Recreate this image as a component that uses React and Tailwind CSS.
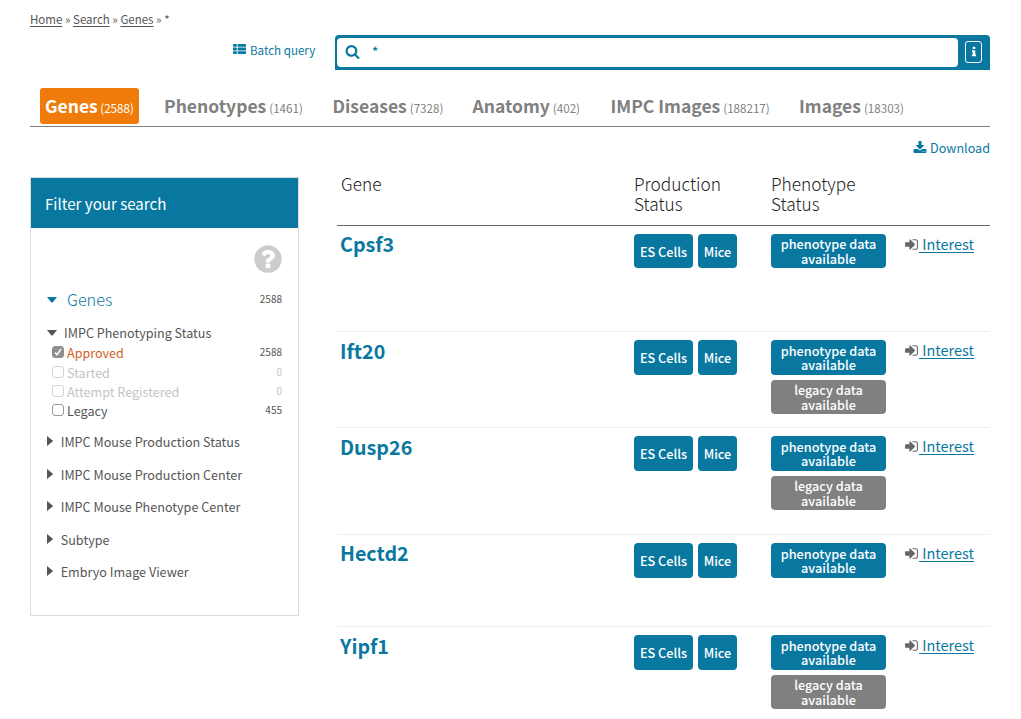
const ICONS = {
  search:
    "M1216 832q0-185-131.5-316.5t-316.5-131.5-316.5 131.5-131.5 316.5 131.5 316.5 316.5 131.5 316.5-131.5 131.5-316.5zm512 832q0 52-38 90t-90 38q-54 0-90-38l-343-342q-179 124-399 124-143 0-273.5-55.5t-225-150-150-225-55.5-273.5 55.5-273.5 150-225 225-150 273.5-55.5 273.5 55.5 225 150 150 225 55.5 273.5q0 220-124 399l343 343q37 37 37 90z",
  question:
    "M1024 1376v-192q0-14-9-23t-23-9h-192q-14 0-23 9t-9 23v192q0 14 9 23t23 9h192q14 0 23-9t9-23zm256-672q0-88-55.5-163t-138.5-116-170-41q-243 0-371 213-15 24 8 42l132 100q7 6 19 6 16 0 25-12 53-68 86-92 34-24 86-24 48 0 85.5 26t37.5 59q0 38-20 61t-68 45q-63 28-115.5 86.5t-52.5 125.5v36q0 14 9 23t23 9h192q14 0 23-9t9-23q0-19 21.5-49.5t54.5-49.5q32-18 49-28.5t46-35 44.5-48 28-60.5 12.5-81zm384 192q0 209-103 385.5t-279.5 279.5-385.5 103-385.5-103-279.5-279.5-103-385.5 103-385.5 279.5-279.5 385.5-103 385.5 103 279.5 279.5 103 385.5z",
  download:
    "M1344 1344q0-26-19-45t-45-19-45 19-19 45 19 45 45 19 45-19 19-45zm256 0q0-26-19-45t-45-19-45 19-19 45 19 45 45 19 45-19 19-45zm128-224v320q0 40-28 68t-68 28h-1472q-40 0-68-28t-28-68v-320q0-40 28-68t68-28h465l135 136q58 56 136 56t136-56l136-136h464q40 0 68 28t28 68zm-325-569q17 41-14 70l-448 448q-18 19-45 19t-45-19l-448-448q-31-29-14-70 17-39 59-39h256v-448q0-26 19-45t45-19h256q26 0 45 19t19 45v448h256q42 0 59 39z",
  signIn:
    "M1312 896q0 26-19 45l-544 544q-19 19-45 19t-45-19-19-45v-288h-448q-26 0-45-19t-19-45v-384q0-26 19-45t45-19h448v-288q0-26 19-45t45-19 45 19l544 544q19 19 19 45zm352-352v704q0 119-84.5 203.5t-203.5 84.5h-320q-13 0-22.5-9.5t-9.5-22.5q0-4-1-20t-.5-26.5 3-23.5 10-19.5 20.5-6.5h320q66 0 113-47t47-113v-704q0-66-47-113t-113-47h-312l-11.5-1-11.5-3-8-5.5-7-9-2-13.5q0-4-1-20t-.5-26.5 3-23.5 10-19.5 20.5-6.5h320q119 0 203.5 84.5t84.5 203.5z",
  info:
    "M1216 1344v128q0 26-19 45t-45 19h-512q-26 0-45-19t-19-45v-128q0-26 19-45t45-19h64v-384h-64q-26 0-45-19t-19-45v-128q0-26 19-45t45-19h384q26 0 45 19t19 45v576h64q26 0 45 19t19 45zm-128-1152v192q0 26-19 45t-45 19h-256q-26 0-45-19t-19-45v-192q0-26 19-45t45-19h256q26 0 45 19t19 45z",
};

function Icon({ name, className }) {
  return (
    <svg viewBox="0 0 1792 1792" className={className} fill="currentColor">
      <path d={ICONS[name]} />
    </svg>
  );
}

function ListIcon({ className }) {
  return (
    <svg viewBox="0 0 13 10" className={className} fill="currentColor">
      {[0, 3.6, 7.2].map((y) => (
        <g key={y}>
          <rect x="0" y={y} width="3.8" height="2.8" rx="0.4" />
          <rect x="4.6" y={y} width="8.4" height="2.8" rx="0.4" />
        </g>
      ))}
    </svg>
  );
}

function Down({ className }) {
  return (
    <svg viewBox="0 0 10 6" className={className} fill="currentColor">
      <path d="M0 0h10L5.8 5.2q-.8.8-1.6 0z" />
    </svg>
  );
}

function Right() {
  return (
    <svg viewBox="0 0 6 10" className="h-[10px] w-[6px]" fill="currentColor">
      <path d="M0 0v10L5.6 5.6q.6-.6 0-1.2z" />
    </svg>
  );
}

const tabs = [
  ["Phenotypes", "(1461)", "w-[168.5px]"],
  ["Diseases", "(7328)", "w-[140px]"],
  ["Anatomy", "(402)", "w-[138px]"],
  ["IMPC Images", "(188217)", "w-[188.5px]"],
  ["Images", "(18303)", "w-[110px]"],
];

const options = [
  { label: "Approved", count: "2588", checked: true, color: "text-[#d2611e]", num: "text-[#555]", box: "border-[#8e8e93] bg-[#8e8e93]", h: "h-[20px]" },
  { label: "Started", count: "0", color: "text-[#c4c4c4]", num: "text-[#c4c4c4]", box: "border-[#d4d4d4]", h: "h-[19px]" },
  { label: "Attempt Registered", count: "0", color: "text-[#c4c4c4]", num: "text-[#c4c4c4]", box: "border-[#d4d4d4]", h: "h-[19px]" },
  { label: "Legacy", count: "455", color: "text-[#555]", num: "text-[#555]", box: "border-[#999]", h: "h-[20px]" },
];

const facets = [
  ["IMPC Mouse Production Status", "h-[33px]"],
  ["IMPC Mouse Production Center", "h-[32px]"],
  ["IMPC Mouse Phenotype Center", "h-[33px]"],
  ["Subtype", "h-[32px]"],
  ["Embryo Image Viewer", "h-[20px]"],
];

const genes = [
  { name: "Cpsf3", row: "h-[106px]", badge: "h-[34px]", top: "pt-[6px]" },
  { name: "Ift20", legacy: true, row: "h-[96px]", badge: "h-[35px]", top: "pt-[7px]" },
  { name: "Dusp26", legacy: true, row: "h-[107px]", badge: "h-[35px]", top: "pt-[7px]" },
  { name: "Hectd2", row: "h-[92px]", badge: "h-[35px]", top: "pt-[6px]" },
  { name: "Yipf1", legacy: true, row: "h-[106px]", badge: "h-[35px]", top: "pt-[7px]" },
];

function Header() {
  return (
    <header className="shrink-0">
      <nav className="mt-[9px] h-[20px] text-[11.5px] leading-[20px] text-[#555]">
        <a className="underline underline-offset-2">Home</a> » <a className="underline underline-offset-2">Search</a> »{" "}
        <a className="underline underline-offset-2">Genes</a> » *
      </nav>
      <div className="mt-[6px] flex h-[35px]">
        <a className="flex w-[305px] items-start pl-[203px] text-[#0978a1]">
          <ListIcon className="mt-[9px] h-[10px] w-[13px]" />
          <span className="ml-[4px] mt-[5px] text-[11.6px] leading-[20px]">Batch query</span>
        </a>
        <div className="flex w-[655px] rounded-t-[4px] bg-[#0978a1] py-[3px] pl-[2px]">
          <div className="flex w-[621px] rounded-[4px] bg-white pl-[8px] text-[#0978a1]">
            <Icon name="search" className="mt-[6px] h-[15px] w-[15px]" />
            <span className="ml-[12px] mt-[4px] text-[13px] font-medium leading-[20px]">*</span>
          </div>
          <div className="ml-[7px] mt-[3px] flex h-[22px] w-[17px] items-center justify-center rounded-[3px] border border-white text-white">
            <Icon name="info" className="h-[12px] w-[12px]" />
          </div>
        </div>
      </div>
      <div className="flex h-[57px] items-end border-b border-[#808080] pl-[10px]">
        <div className="mb-[2px] mr-[25px] flex h-[36px] w-[99px] items-baseline rounded-[3px] bg-[#ef7b0b] pl-[5px] leading-[36px] text-white">
          <b className="text-[17.5px]">Genes</b>
          <span className="ml-[2.5px] text-[11.6px]">(2588)</span>
        </div>
        {tabs.map(([label, count, width]) => (
          <div key={label} className={"mb-[2px] flex h-[36px] items-baseline whitespace-nowrap leading-[36px] text-[#808080] " + width}>
            <b className="text-[17.5px]">{label}</b>
            <span className="ml-[3px] text-[11.6px]">{count}</span>
          </div>
        ))}
      </div>
      <div className="flex h-[42px] justify-end pt-[11px] text-[#0978a1]">
        <Icon name="download" className="mr-[3px] mt-[3px] h-[14px] w-[14px]" />
        <span className="text-[12.6px] leading-[20px]">Download</span>
      </div>
    </header>
  );
}

function Sidebar() {
  return (
    <aside className="mt-[8px] h-[439px] w-[269px] border border-[#dcdcdc] text-[#555]">
      <h3 className="h-[50px] bg-[#0978a1] pl-[14px] text-[15.1px] leading-[50px] text-white">Filter your search</h3>
      <div className="flex justify-end pr-[14.5px] pt-[15px] text-[#ccc]">
        <Icon name="question" className="h-[32px] w-[32px]" />
      </div>
      <div className="mt-[14px] flex h-[20px] items-center pl-[16px] pr-[16px]">
        <Down className="mt-px h-[6px] w-[10px] text-[#0978a1]" />
        <span className="ml-[10px] flex-1 text-[16.2px] font-light leading-[20px] text-[#0978a1]">Genes</span>
        <span className="text-[10px] leading-[20px]">2588</span>
      </div>
      <div className="mt-[14px] flex h-[20px] items-center pl-[16px]">
        <Down className="h-[6px] w-[10px]" />
        <span className="ml-[7px] text-[12.6px] leading-[20px]">IMPC Phenotyping Status</span>
      </div>
      {options.map((o) => (
        <div key={o.label} className={"flex items-start pl-[21px] pr-[16px] " + o.h}>
          <span className={"mt-[3px] flex h-[12px] w-[12px] items-center justify-center rounded-[3px] border " + o.box}>
            {o.checked && (
              <svg viewBox="0 0 10 10" className="h-[10px] w-[10px]" fill="none" stroke="white" strokeWidth="1.5">
                <path d="M2 5.5l2 2.2L8 2" />
              </svg>
            )}
          </span>
          <span className={"ml-[3px] flex-1 text-[12.6px] leading-[20px] " + o.color}>{o.label}</span>
          <span className={"text-[10px] leading-[18px] " + o.num}>{o.count}</span>
        </div>
      ))}
      <div className="mt-[11px]">
        {facets.map(([label, h]) => (
          <div key={label} className={"flex items-start pl-[16px] " + h}>
            <span className="mt-[4px]">
              <Right />
            </span>
            <span className="ml-[7.7px] text-[12.6px] leading-[20px]">{label}</span>
          </div>
        ))}
      </div>
    </aside>
  );
}

const badge = "flex items-center justify-center rounded-[4px] pt-px text-[12.7px] font-medium text-white ";

function Results() {
  return (
    <section className="ml-[38px] w-[653px]">
      <div className="flex h-[57px] border-b border-[#666] pt-[5px] text-[17.3px] font-light leading-[20px] text-[#222]">
        <div className="w-[297px] pl-[4px]">Gene</div>
        <div className="w-[137px]">Production<br />Status</div>
        <div>Phenotype<br />Status</div>
      </div>
      {genes.map((g) => (
        <div key={g.name} className={"flex border-b border-[#eee] " + g.row}>
          <a className={"w-[297px] pl-[3px] text-[19.7px] font-bold leading-[24px] text-[#0978a1] " + g.top}>{g.name}</a>
          <div className="flex w-[137px] gap-[5px] pt-[8px]">
            <span className={badge + "w-[59px] bg-[#0978a1] " + g.badge}>ES Cells</span>
            <span className={badge + "w-[39px] bg-[#0978a1] " + g.badge}>Mice</span>
          </div>
          <div className="flex w-[133px] flex-col gap-[5px] pt-[8px]">
            <span className={badge + "w-[115px] bg-[#0978a1] text-center leading-[14.4px] " + g.badge}>phenotype data<br />available</span>
            {g.legacy && (
              <span className={badge + "h-[34px] w-[115px] bg-[#808080] text-center leading-[14.4px]"}>legacy data<br />available</span>
            )}
          </div>
          <div className="flex items-start pt-[8px] text-[#666]">
            <Icon name="signIn" className="mt-[3px] h-[15px] w-[15px]" />
            <a className="whitespace-pre text-[14.5px] leading-[20px] text-[#0978a1] underline underline-offset-2"> Interest</a>
          </div>
        </div>
      ))}
    </section>
  );
}

export default function App() {
  return (
    <div className="flex h-[719px] w-[1021px] flex-col overflow-hidden bg-white pl-[30px] pr-[31px] font-['Noto_Sans_CJK_SC','Noto_Sans',sans-serif]">
      <Header />
      <main className="flex shrink-0 items-start">
        <Sidebar />
        <Results />
      </main>
    </div>
  );
}
